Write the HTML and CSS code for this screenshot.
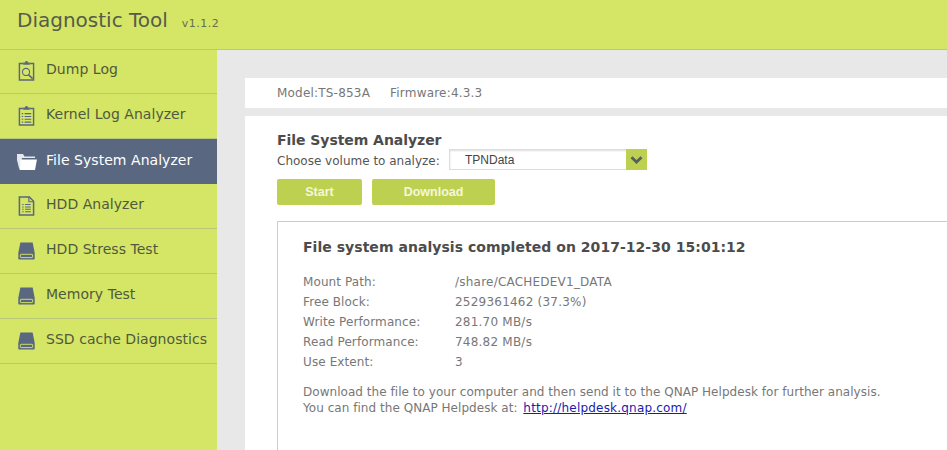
FILE: index.html
```html
<!DOCTYPE html>
<html lang="en">
<head>
<meta charset="utf-8">
<title>Diagnostic Tool</title>
<link rel="stylesheet" href="styles.css">
</head>
<body>
<header class="topbar">
  <h1 class="app-title">Diagnostic Tool</h1>
  <span class="app-version">v1.1.2</span>
</header>
<div class="layout">
  <nav class="sidebar">
    <a class="nav-item">
      <svg class="nav-icon" viewBox="0 0 18 22"><path d="M5.5 3H1.500v17.5h15V3h-4" fill="none" stroke="#5a6781" stroke-width="1.5"/><path d="M5.5 4.500V2h2a1.500 1.500 0 0 1 3 0h2v2.500z" fill="#5a6781"/><circle cx="8.500" cy="12" r="3.800" fill="none" stroke="#5a6781" stroke-width="1.200"/><path d="M11 14.800l4.500 4.200" stroke="#5a6781" stroke-width="1.700"/></svg>
      <span>Dump Log</span>
    </a>
    <a class="nav-item">
      <svg class="nav-icon" viewBox="0 0 18 22"><path d="M5.5 3H1.500v17.500h15V3h-4" fill="none" stroke="#5a6781" stroke-width="1.500"/><path d="M5.5 4.500V2h2a1.500 1.500 0 0 1 3 0h2v2.500z" fill="#5a6781"/><path d="M4 8.500h1.500M7 8.500h7M4 11.500h1.500M7 11.500h7M4 14.500h1.500M7 14.500h7M4 17.500h1.500M7 17.500h7" stroke="#5a6781" stroke-width="1.200"/></svg>
      <span>Kernel Log Analyzer</span>
    </a>
    <a class="nav-item nav-item-active">
      <svg class="nav-icon nav-icon-folder" viewBox="0 0 20 18"><path d="M0 1h6l1.500 2.500H18V5H5L2.500 17 0 7z" fill="#fff" opacity=".85"/><path d="M3.500 6.500h16.500L18 17H2.800z" fill="#fff"/></svg>
      <span>File System Analyzer</span>
    </a>
    <a class="nav-item">
      <svg class="nav-icon" viewBox="0 0 18 22"><path d="M1.500 1.500h10.500l4.500 4.500v14.500h-15z" fill="none" stroke="#5a6781" stroke-width="1.600"/><path d="M11.500 1.500v5h5" fill="none" stroke="#5a6781" stroke-width="1.200"/><path d="M4.500 9.500h1.500M7.500 9.500h6M4.500 12h1.500M7.500 12h6M4.500 14.500h1.500M7.500 14.500h6M4.500 17h1.500M7.500 17h6" stroke="#5a6781" stroke-width="1.100"/></svg>
      <span>HDD Analyzer</span>
    </a>
    <a class="nav-item">
      <svg class="nav-icon" viewBox="0 0 18 18"><use href="#hdd"/></svg>
      <span>HDD Stress Test</span>
    </a>
    <a class="nav-item">
      <svg class="nav-icon" viewBox="0 0 18 18"><use href="#hdd"/></svg>
      <span>Memory Test</span>
    </a>
    <a class="nav-item">
      <svg class="nav-icon" viewBox="0 0 18 18"><use href="#hdd"/></svg>
      <span>SSD cache Diagnostics</span>
    </a>
    <svg class="defs" width="0" height="0"><defs><g id="hdd"><path d="M2.500 0h13l2.200 11v6a1 1 0 0 1-1 1H1.300a1 1 0 0 1-1-1v-6z" fill="#5a6781"/><rect x="2.500" y="12.500" width="13" height="3.500" rx=".8" fill="none" stroke="#d5e566" stroke-width="1"/></g></defs></svg>
  </nav>
  <main class="content">
    <section class="info-bar">
      <span>Model:TS-853A</span>
      <span>Firmware:4.3.3</span>
    </section>
    <section class="panel">
      <h2 class="panel-title">File System Analyzer</h2>
      <div class="volume-row">
        <label class="volume-label">Choose volume to analyze:</label>
        <div class="select">
          <span class="select-value">TPNData</span>
          <span class="select-arrow"><svg width="13" height="8" viewBox="0 0 13 8"><path d="M1.500 1.200L6.500 6l5-4.800" fill="none" stroke="#55605f" stroke-width="2.800"/></svg></span>
        </div>
      </div>
      <div class="actions">
        <button class="btn btn-start">Start</button>
        <button class="btn btn-download">Download</button>
      </div>
      <div class="result">
        <h3 class="result-title">File system analysis completed on 2017-12-30 15:01:12</h3>
        <dl class="facts">
          <dt>Mount Path:</dt><dd>/share/CACHEDEV1_DATA</dd>
          <dt>Free Block:</dt><dd>2529361462 (37.3%)</dd>
          <dt>Write Performance:</dt><dd>281.70 MB/s</dd>
          <dt>Read Performance:</dt><dd>748.82 MB/s</dd>
          <dt>Use Extent:</dt><dd>3</dd>
        </dl>
        <p class="note">Download the file to your computer and then send it to the QNAP Helpdesk for further analysis.<br>You can find the QNAP Helpdesk at: <a class="note-link" href="#">http://helpdesk.qnap.com/</a></p>
      </div>
    </section>
  </main>
</div>
</body>
</html>
```
FILE: styles.css
```css
* { box-sizing: border-box; }
html, body { margin: 0; height: 100%; overflow: hidden; }
body { font-family: "DejaVu Sans", Verdana, sans-serif; background: #e8e8e8; color: #555; }
.topbar { height: 50px; background: #d5e566; border-bottom: 1px solid #b9c77f; display: flex; align-items: baseline; padding: 8px 0 0 17px; }
.app-title { margin: 0; font-size: 20px; font-weight: 400; color: #555c4a; }
.app-version { margin-left: 14px; font-size: 11px; letter-spacing: .5px; color: #666e50; }
.layout { display: flex; height: 400px; }
.sidebar { width: 217px; background: #d5e566; flex: none; }
.defs { position: absolute; }
.nav-item { height: 45px; display: flex; align-items: flex-start; padding: 11px 0 0 18px; border-bottom: 1px solid #b8c878; font-size: 14px; letter-spacing: .04px; color: #4f5a3d; }
.nav-item:first-child { height: 44px; padding-top: 10px; }
.nav-item span { margin-left: 11px; line-height: 18px; }
.nav-item-active { background: #5a6781; color: #fff; border-bottom: 0; padding-top: 12px; }
.nav-icon { width: 17px; height: 22px; flex: none; }
.nav-icon-folder { width: 20px; height: 18px; margin: 2px -2px 0 -1px; }
.content { flex: 1; min-width: 0; padding: 28px 0 0 28px; display: flex; flex-direction: column; }
.info-bar { height: 30px; flex: none; background: #fff; display: flex; align-items: center; gap: 20px; padding-left: 32px; font-size: 12px; letter-spacing: .2px; color: #777; }
.panel { margin-top: 8px; background: #fff; flex: 1; min-height: 0; display: flex; flex-direction: column; padding: 16px 0 0 32px; }
.panel-title { margin: 0; font-size: 14px; line-height: 17px; letter-spacing: -.05px; color: #4c4c4c; font-weight: 700; }
.volume-row { display: flex; align-items: center; height: 21px; flex: none; }
.volume-label { font-size: 12px; line-height: 14px; padding-top: 2px; color: #555; width: 172px; }
.select { width: 198px; height: 21px; border: 1px solid #ddd; display: flex; justify-content: space-between; align-items: center; font: 12px "Liberation Sans", Arial, sans-serif; color: #444; box-shadow: inset 0 1px 2px #ddd; }
.select-value { padding-left: 15px; padding-top: 1px; }
.select-arrow { width: 21px; height: 21px; margin: -1px -1px -1px 0; background: #bdd050; display: flex; align-items: center; justify-content: center; }
.actions { display: flex; gap: 10px; margin-top: 9px; flex: none; }
.btn { height: 26px; border: 0; border-radius: 2px; background: #bdd050; color: #f3f7d8; font: 700 12.5px "Liberation Sans", Arial, sans-serif; padding: 0; }
.btn-start { width: 85px; }
.btn-download { width: 123px; }
.result { margin-top: 16px; border: 1px solid #ccc; border-width: 1px 0 0 1px; flex: 1; min-height: 0; padding: 16px 0 0 25px; }
.result-title { margin: 0; font-size: 14px; line-height: 18px; letter-spacing: .04px; font-weight: 700; color: #4c4c4c; }
.facts { display: grid; grid-template-columns: 152px 1fr; grid-auto-rows: 20px; margin: 16px 0 0; font-size: 12px; line-height: 20px; color: #777; }
.facts dt, .facts dd { margin: 0; }
.facts dt { letter-spacing: .1px; }
.facts dd { letter-spacing: .22px; }
.note { margin: 12px 0 0; font-size: 12px; line-height: 16px; letter-spacing: .04px; color: #777; }
.note-link { margin-left: 2px; color: #1a1ab0; letter-spacing: .2px; }
```
